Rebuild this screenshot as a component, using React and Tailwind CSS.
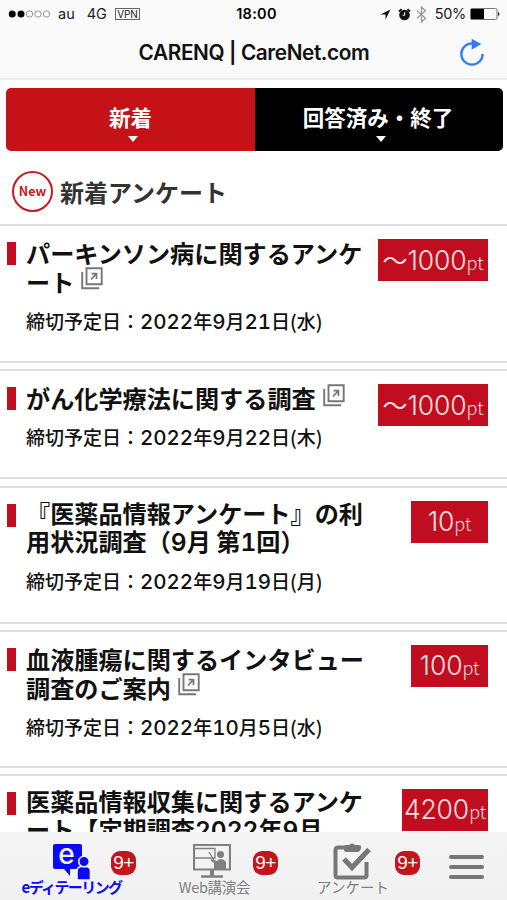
import { Fragment } from 'react';
import clsx from 'clsx';

const surveys = [
  { title: 'パーキンソン病に関するアンケート', external: true, deadline: '2022年9月21日(水)', point: '1000', upTo: true, height: 'h-[139px]', badge: 'w-[110px]' },
  { title: 'がん化学療法に関する調査', external: true, deadline: '2022年9月22日(木)', point: '1000', upTo: true, height: 'h-[110px]', badge: 'w-[110px]' },
  { title: '『医薬品情報アンケート』の利用状況調査（9月 第1回）', external: false, deadline: '2022年9月19日(月)', point: '10', height: 'h-[138px]', badge: 'w-[77px]' },
  { title: '血液腫瘍に関するインタビュー調査のご案内', external: true, deadline: '2022年10月5日(水)', point: '100', height: 'h-[138px]', badge: 'w-[77px]' },
  { title: '医薬品情報収集に関するアンケート【定期調査2022年9月', external: false, deadline: '', point: '4200', height: 'h-[138px]', badge: 'w-[86px]' },
];

// Les chiffres sont plus larges que ceux de la police japonaise
function WideDigits({ text, className }) {
  return text.split(/(\d+)/).map((part, i) =>
    /\d/.test(part) ? <span key={i} className={className}>{part}</span> : <Fragment key={i}>{part}</Fragment>
  );
}

function ExternalIcon() {
  return (
    <svg className="inline-block ml-[7px] -mt-[13px] w-[23px] h-[23px]" viewBox="0 0 23 23" fill="none" stroke="#777">
      <path d="M5.500 1.3h15.2v15.9H5.500z" strokeWidth="1.9" />
      <path d="M1.2 5v16.2h17" strokeWidth="1.9" />
      <path d="M10 12.500l5-5.400M10.500 6.600h5v5.400" strokeWidth="1.7" />
    </svg>
  );
}

function StatusBar() {
  return (
    <div className="h-[28px] flex items-center justify-between pl-[8px] pr-[7px] text-[14.5px] text-[#222]">
      <div className="flex items-center w-[205px]">
        <svg width="44" height="10" viewBox="0 0 44 10">
          <circle cx="4.2" cy="5" r="3.5" fill="#000" />
          <circle cx="13" cy="5" r="3.5" fill="#000" />
          <g fill="none" stroke="#888" strokeWidth="0.9">
            <circle cx="21.5" cy="5" r="3.2" />
            <circle cx="30" cy="5" r="3.2" />
            <circle cx="38.5" cy="5" r="3.2" />
          </g>
        </svg>
        <span className="ml-[6px]">au</span>
        <span className="ml-[12px]">4G</span>
        <span className="ml-[8px] w-[25px] h-[12px] border border-[#666] text-[10px] leading-[10px] text-center tracking-tight">VPN</span>
      </div>
      <span className="font-semibold text-black text-[14.5px] tracking-[0.3px]">18:00</span>
      <div className="flex items-center justify-end w-[200px]">
        <svg className="mr-[7px]" width="11" height="11" viewBox="0 0 12 12">
          <path d="M11.500 0.500L0.500 6H6v5.500z" fill="#111" />
        </svg>
        <svg className="mr-[5px]" width="13" height="13" viewBox="0 0 13 13">
          <circle cx="6.5" cy="7" r="5.3" fill="#111" />
          <path d="M1 3.6l2.6-2.3M12 3.6L9.4 1.3" stroke="#111" strokeWidth="2" />
          <path d="M6.7 4.2v3H4.6" stroke="#fff" strokeWidth="1" fill="none" />
        </svg>
        <svg className="mr-[8px]" width="11" height="17" viewBox="0 0 11 17" fill="none" stroke="#999" strokeWidth="1.3">
          <path d="M1 4.7l8.5 7.6-4 3.7V1l4 3.7L1 12.3" />
        </svg>
        <span className="text-[14.5px] mr-[4px] tracking-[-0.3px]">50%</span>
        <svg width="30" height="12" viewBox="0 0 30 12">
          <rect x="0.5" y="0.5" width="26.5" height="11" rx="1.5" fill="none" stroke="#777" />
          <rect x="1" y="1" width="13" height="10" fill="#000" />
          <path d="M28 3.500q3 2.500 0 5z" fill="#333" />
        </svg>
      </div>
    </div>
  );
}

function Header() {
  return (
    <header className="h-[80px] shrink-0 bg-[#fafafa] border-b-2 border-[#ededed] font-['Inter','Liberation_Sans',sans-serif]">
      <StatusBar />
      <div className="h-[49px] flex items-center justify-between pl-[49px] pr-[22px]">
        <h1 className="flex-1 text-center text-[20.8px] font-semibold tracking-[-0.4px] text-[#111]">CARENQ | CareNet.com</h1>
        <svg width="26" height="29" viewBox="0 0 78 87">
          <path d="M71 48a32 32 0 1 1-32-32" fill="none" stroke="#2f7cf6" strokeWidth="7" />
          <path d="M38 2l29 16-29 17z" fill="#2f7cf6" />
        </svg>
      </div>
    </header>
  );
}

function Tab({ label, className, arrow }) {
  return (
    <button className={clsx('flex flex-col items-center text-white', className)}>
      <span className="mt-[13px] text-[21.5px] leading-[32px] font-bold">{label}</span>
      <svg className={clsx('mt-[3px]', arrow)} width="10" height="6" viewBox="0 0 10 6"><path d="M0 0h10L5 6z" fill="#fff" /></svg>
    </button>
  );
}

function Survey({ title, external, deadline, point, upTo, height, badge }) {
  return (
    <li className={clsx('flex justify-between items-start border-y-2 border-[#dedede] mb-[6.3px] pl-[7px] pr-[19px] shrink-0', height)}>
      <span className="mt-[16px] w-[9px] h-[23px] bg-[#c00d20]" />
      <div className={clsx('ml-[10px] flex-1', external ? 'mt-[12px]' : 'mt-[11px]')}>
        <h3 className={clsx('w-[342px] text-[24.15px] font-bold text-[#111] break-all', external ? 'leading-[29px]' : 'leading-[28px]')}>
          <WideDigits text={title} className="font-['Inter'] text-[24.5px] leading-none font-semibold tabular-nums" />
          {external && <ExternalIcon />}
        </h3>
        {deadline && (
          <p className={clsx('text-[19px] leading-[20px] font-medium text-[#111] whitespace-nowrap', external ? 'mt-[15px]' : 'mt-[16px]')}>
            締切予定日：<WideDigits text={deadline} className="font-['Inter'] text-[20.5px] leading-none font-medium tabular-nums" />
          </p>
        )}
      </div>
      <span className={clsx('mt-[13px] h-[42px] shrink-0 flex items-baseline justify-center bg-[#c00d20] text-[#fde0e0] whitespace-nowrap', badge)}>
        {upTo && <span className="text-[25px] leading-[40px]">～</span>}
        <span className="text-[26.5px] leading-[41px] font-light font-['Inter'] tracking-[-0.1px]">{point}</span>
        <span className="text-[18px] leading-[20px] mb-px font-light">pt</span>
      </span>
    </li>
  );
}

function NavItem({ label, active, labelClass, children }) {
  return (
    <a className="relative w-[142px] pt-[11px] flex flex-col items-center">
      {children}
      <span className={clsx('whitespace-nowrap leading-[16px] -mt-px', labelClass, active ? 'text-[#0a0af0] font-bold text-[15px] tracking-[-1.6px]' : 'text-[#808080] text-[14.5px]')}>{label}</span>
      <span className="absolute left-[111px] top-[19px] w-[25px] h-[24px] rounded-[9px] bg-[#c4141c] text-white text-[19px] leading-[24px] text-center tracking-[-0.5px] font-['Liberation_Sans',sans-serif]">9+</span>
    </a>
  );
}

export default function App() {
  return (
    <div className="w-[507px] h-[900px] flex flex-col overflow-hidden bg-white font-['Noto_Sans_CJK_JP',sans-serif]">
      <Header />

      <main className="flex-1 min-h-0 overflow-hidden">
        {/* Onglets */}
        <div className="ml-[6px] mr-[4px] mt-[8px] h-[63px] flex rounded-[5px] overflow-hidden">
          <Tab label="新着" className="w-[249px] bg-[#c41216]" arrow="ml-[5px]" />
          <Tab label="回答済み・終了" className="flex-1 bg-black pr-[2px]" arrow="ml-[6px]" />
        </div>

        <div className="h-[73px] pl-[12px] pt-[20px] flex items-start">
          <span className="w-[41px] h-[41px] rounded-full border-[2.5px] border-[#c41a20] text-[#c41a20] text-[12.5px] leading-[35px] text-center font-bold">New</span>
          <h2 className="ml-[7px] mt-[2px] text-[24px] leading-[38px] font-bold text-[#333]">新着アンケート</h2>
        </div>

        <ul className="flex flex-col">
          {surveys.map((s) => <Survey key={s.title} {...s} />)}
        </ul>
      </main>

      {/* Barre de navigation */}
      <nav className="h-[68px] shrink-0 flex bg-gradient-to-b from-[#f4f4f4] to-[#f1f1f1]">
        <NavItem label="eディテーリング" active labelClass="ml-px">
          <svg className="ml-[1px]" width="40" height="37" viewBox="0 0 40 37">
            <path d="M3 1h25q2 0 2 2v21q0 2-2 2H18v7l-6-7H3q-2 0-2-2V3q0-2 2-2z" fill="#0a0af5" />
            <g fill="#0a0af5" stroke="#f3f3f3" strokeWidth="1.6">
              <path d="M25 37v-8.500q0-5 5-5h3.500q5 0 5 5V37z" />
              <circle cx="32" cy="18.5" r="5.3" />
            </g>
            <text x="14.500" y="20.500" textAnchor="middle" fontSize="28" fontWeight="500" fill="#f3f3f3" fontFamily="Inter">e</text>
          </svg>
        </NavItem>
        <NavItem label="Web講演会" labelClass="ml-[3px] tracking-[-0.3px]">
          <svg className="mr-[3px]" width="38" height="37" viewBox="0 0 38 37" fill="none" stroke="#808080">
            <path d="M1 2h36v24.500H1z" strokeWidth="2.2" />
            <path d="M2 5.500h20v9.500H2M16 9l6 10" strokeWidth="1.3" />
            <circle cx="27.500" cy="11.500" r="3.500" fill="#808080" stroke="none" />
            <path d="M18 16l6 2q1-2 4-2t5 3v7H21v-6l-3-2z" fill="#808080" stroke="none" />
            <path d="M19 27v6" strokeWidth="4" />
            <path d="M8 33.500h22" strokeWidth="2.500" />
          </svg>
        </NavItem>
        <NavItem label="アンケート" labelClass="mr-[4px]">
          <svg className="mr-[6px]" width="40" height="37" viewBox="0 0 40 37" fill="none" stroke="#777">
            <path d="M29 4.500H6q-2.500 0-2.500 2.500v25.500q0 2 2.500 2h26q2.500 0 2.500-2V19" strokeWidth="4" />
            <path d="M12 4q0-2 2-2h3q1-1.500 3-1.500t3 1.500h3q2 0 2 2v3q0 2-2 2H14q-2 0-2-2z" fill="#777" stroke="none" />
            <path d="M12 16l8 8.500L37 6.500" strokeWidth="5" />
          </svg>
        </NavItem>
        <button className="flex-1 flex flex-col gap-[6px] pl-[23px] pt-[23px]">
          <span className="w-[35px] h-[4px] rounded-full bg-[#777]" />
          <span className="w-[35px] h-[4px] rounded-full bg-[#777]" />
          <span className="w-[35px] h-[4px] rounded-full bg-[#777]" />
        </button>
      </nav>
    </div>
  );
}
